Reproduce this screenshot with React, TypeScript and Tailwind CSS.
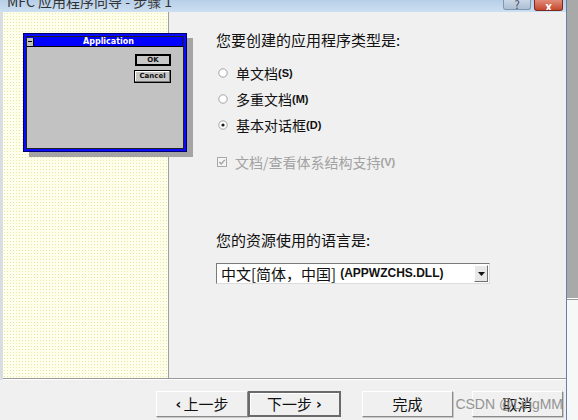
import React from "react";

const cjk = "font-['Noto_Sans_CJK_SC','Noto_Sans',sans-serif]";

function Radio({ checked }: { checked?: boolean }) {
  return (
    <svg width="10" height="10" viewBox="0 0 10 10" className="shrink-0">
      <circle cx="5" cy="5" r="4.2" fill="#ffffff" stroke="#9a9a9a" strokeWidth="0.9" />
      {checked && <circle cx="5" cy="5" r="1.6" fill="#1a1a1a" />}
    </svg>
  );
}

function Option({ label, hot, checked }: { label: string; hot: string; checked?: boolean }) {
  return (
    <div className="flex h-[20px] items-center">
      <div className="ml-[2px] mr-[8px] flex">
        <Radio checked={checked} />
      </div>
      <span className="text-[14px] leading-[20px] text-[#111]">{label}</span>
      <span className="font-['Liberation_Sans',sans-serif] text-[11px] font-bold leading-[20px] text-[#111]">
        ({hot})
      </span>
    </div>
  );
}

function WizButton({ children, def }: { children: React.ReactNode; def?: boolean }) {
  return (
    <div
      className={`flex h-[26px] items-center justify-center bg-[#f0f0f0] text-[15px] text-[#111] ${
        def
          ? "border-2 border-[#6a6a6a] shadow-[inset_1px_1px_0_#ffffff]"
          : "border border-t-[#ffffff] border-l-[#ffffff] border-b-[#8a8a8a] border-r-[#8a8a8a] shadow-[1px_1px_0_#c8c8c8]"
      }`}
    >
      {children}
    </div>
  );
}

function Preview() {
  return (
    <div className="relative z-10 ml-[20px] mt-[21px] h-[119px] w-[164px] border border-[#00006a] bg-[#0a0aff] p-[2px] shadow-[6px_5px_0_0_#a4a4a4]">
      <div className="flex h-full flex-col border border-[#202020]">
        <div className="flex h-[9px] items-center bg-[#0000ff]">
          <div className="flex h-[8px] w-[7px] items-center justify-center border-r border-[#000] bg-[#c0c0c0]">
            <div className="h-[1px] w-[4px] bg-[#000]" />
          </div>
          <div className="flex-1 text-center font-['DejaVu_Sans',sans-serif] text-[8px] font-bold leading-[9px] text-white">
            Application
          </div>
        </div>
        <div className="flex flex-1 flex-col items-end border-t border-[#000] bg-[#c2c2c2] pr-[12px] pt-[7px]">
          <div className="flex h-[12px] w-[36px] items-center justify-center border-2 border-[#000] bg-[#c8c8c8] font-['DejaVu_Sans',sans-serif] text-[7px] font-bold text-[#111]">
            OK
          </div>
          <div className="mt-[4px] flex h-[13px] w-[37px] items-center justify-center border border-[#000] bg-[#c8c8c8] font-['DejaVu_Sans',sans-serif] text-[7px] font-bold text-[#111] shadow-[inset_-1px_-1px_0_#777,inset_1px_1px_0_#fff]">
            Cancel
          </div>
        </div>
      </div>
    </div>
  );
}

export default function App() {
  return (
    <div className={`flex h-[420px] w-[578px] overflow-hidden bg-[#f0f0f0] ${cjk}`}>
      <div className="flex w-[566px] flex-col">
        <div className="flex h-[12px] overflow-hidden bg-linear-to-b from-[#b7cfe8] to-[#cddff2]">
          <div className="-mt-[6px] ml-[7px] flex-1 text-[14px] leading-[14px] text-[#333]">
            MFC 应用程序向导 - 步骤 1
          </div>
          <div className="flex h-[10px] w-[28px] items-end justify-center overflow-hidden rounded-b-[3px] border border-t-0 border-[#7f96b1] bg-linear-to-b from-[#c9d7e6] to-[#aebfd3] text-[11px] leading-[10px] text-[#445]">
            ?
          </div>
          <div className="ml-[3px] mr-[3px] flex h-[11px] w-[29px] items-end justify-center overflow-hidden rounded-b-[3px] border border-t-0 border-[#7d2a1d] bg-linear-to-b from-[#e08c78] to-[#c4462e] text-[12px] font-bold leading-[9px] text-white">
            x
          </div>
        </div>
        <div className="flex h-[366px] border-l-[3px] border-[#d8dde2]">
          <div className="w-[166px] border-r border-[#a0a0a0] bg-[#ffffee] bg-[radial-gradient(circle,#e8e8a0_0.7px,transparent_0.9px)] bg-[length:3px_3px]">
            <Preview />
          </div>
          <div className="flex flex-1 flex-col pl-[47px] pt-[18px]">
            <div className="text-[15px] leading-[20px] text-[#111]">您要创建的应用程序类型是:</div>
            <div className="mt-[13px] flex flex-col gap-[6px]">
              <Option label="单文档" hot="S" />
              <Option label="多重文档" hot="M" />
              <Option label="基本对话框" hot="D" checked />
            </div>
            <div className="mt-[17px] flex h-[20px] items-center">
              <svg width="10" height="10" viewBox="0 0 10 10" className="ml-[1px] mr-[8px] shrink-0">
                <rect x="0.5" y="0.5" width="9" height="9" fill="#f4f4f4" stroke="#a8a8a8" />
                <path d="M2.3 5 L4.2 7 L7.8 2.8" fill="none" stroke="#a0a0a0" strokeWidth="1.3" />
              </svg>
              <span className="text-[14px] leading-[20px] text-[#a2a2a2]">文档/查看体系结构支持</span>
              <span className="font-['Liberation_Sans',sans-serif] text-[11px] font-bold leading-[20px] text-[#a2a2a2]">
                (V)
              </span>
            </div>
            <div className="mt-[58px] text-[15px] leading-[20px] text-[#111]">您的资源使用的语言是:</div>
            <div className="mt-[13px] flex h-[21px] w-[274px] items-center border border-t-[#7a7a7a] border-l-[#7a7a7a] border-b-[#dcdcdc] border-r-[#dcdcdc] bg-white">
              <div className="flex flex-1 items-center pl-[4px] text-[15px] leading-[19px] text-[#111]">
                中文[简体，中国]
                <span className="ml-[4px] font-['Liberation_Sans',sans-serif] text-[12px] font-bold">
                  (APPWZCHS.DLL)
                </span>
              </div>
              <div className="mr-[1px] flex h-[17px] w-[14px] items-center justify-center border border-t-[#ffffff] border-l-[#ffffff] border-b-[#707070] border-r-[#707070] bg-[#e8e8e8]">
                <svg width="7" height="4" viewBox="0 0 7 4">
                  <path d="M0 0 H7 L3.5 4 Z" fill="#111" />
                </svg>
              </div>
            </div>
          </div>
        </div>
        <div className="border-l-[3px] border-[#d8dde2]">
          <div className="h-[1px] bg-[#9a9a9a]" />
          <div className="h-[1px] bg-white" />
        </div>
        <div className="relative flex flex-1 items-start pl-[156px] pt-[11px]">
          <div className="w-[92px]">
            <WizButton>
              <span className="mr-[2px] font-['DejaVu_Sans',sans-serif] text-[14px] font-bold">‹</span>上一步
            </WizButton>
          </div>
          <div className="w-[93px]">
            <WizButton def>
              下一步<span className="ml-[4px] font-['DejaVu_Sans',sans-serif] text-[14px] font-bold">›</span>
            </WizButton>
          </div>
          <div className="ml-[21px] w-[91px]">
            <WizButton>完成</WizButton>
          </div>
          <div className="ml-[19px] w-[91px]">
            <WizButton>取消</WizButton>
          </div>
          <div className="absolute right-[3px] top-[14px] font-['Liberation_Sans',sans-serif] text-[14px] leading-[20px] text-[#8a8a8a] opacity-90">
            CSDN @LingMM
          </div>
        </div>
      </div>
      <div className="flex w-[12px] flex-col border-l border-[#5f84a8]">
        <div className="h-[298px] bg-[#a9a9a9]" />
        <div className="h-[1px] bg-white" />
        <div className="h-[1px] bg-[#9a9a9a]" />
        <div className="flex-1 bg-[#f7f7f7]" />
      </div>
    </div>
  );
}
